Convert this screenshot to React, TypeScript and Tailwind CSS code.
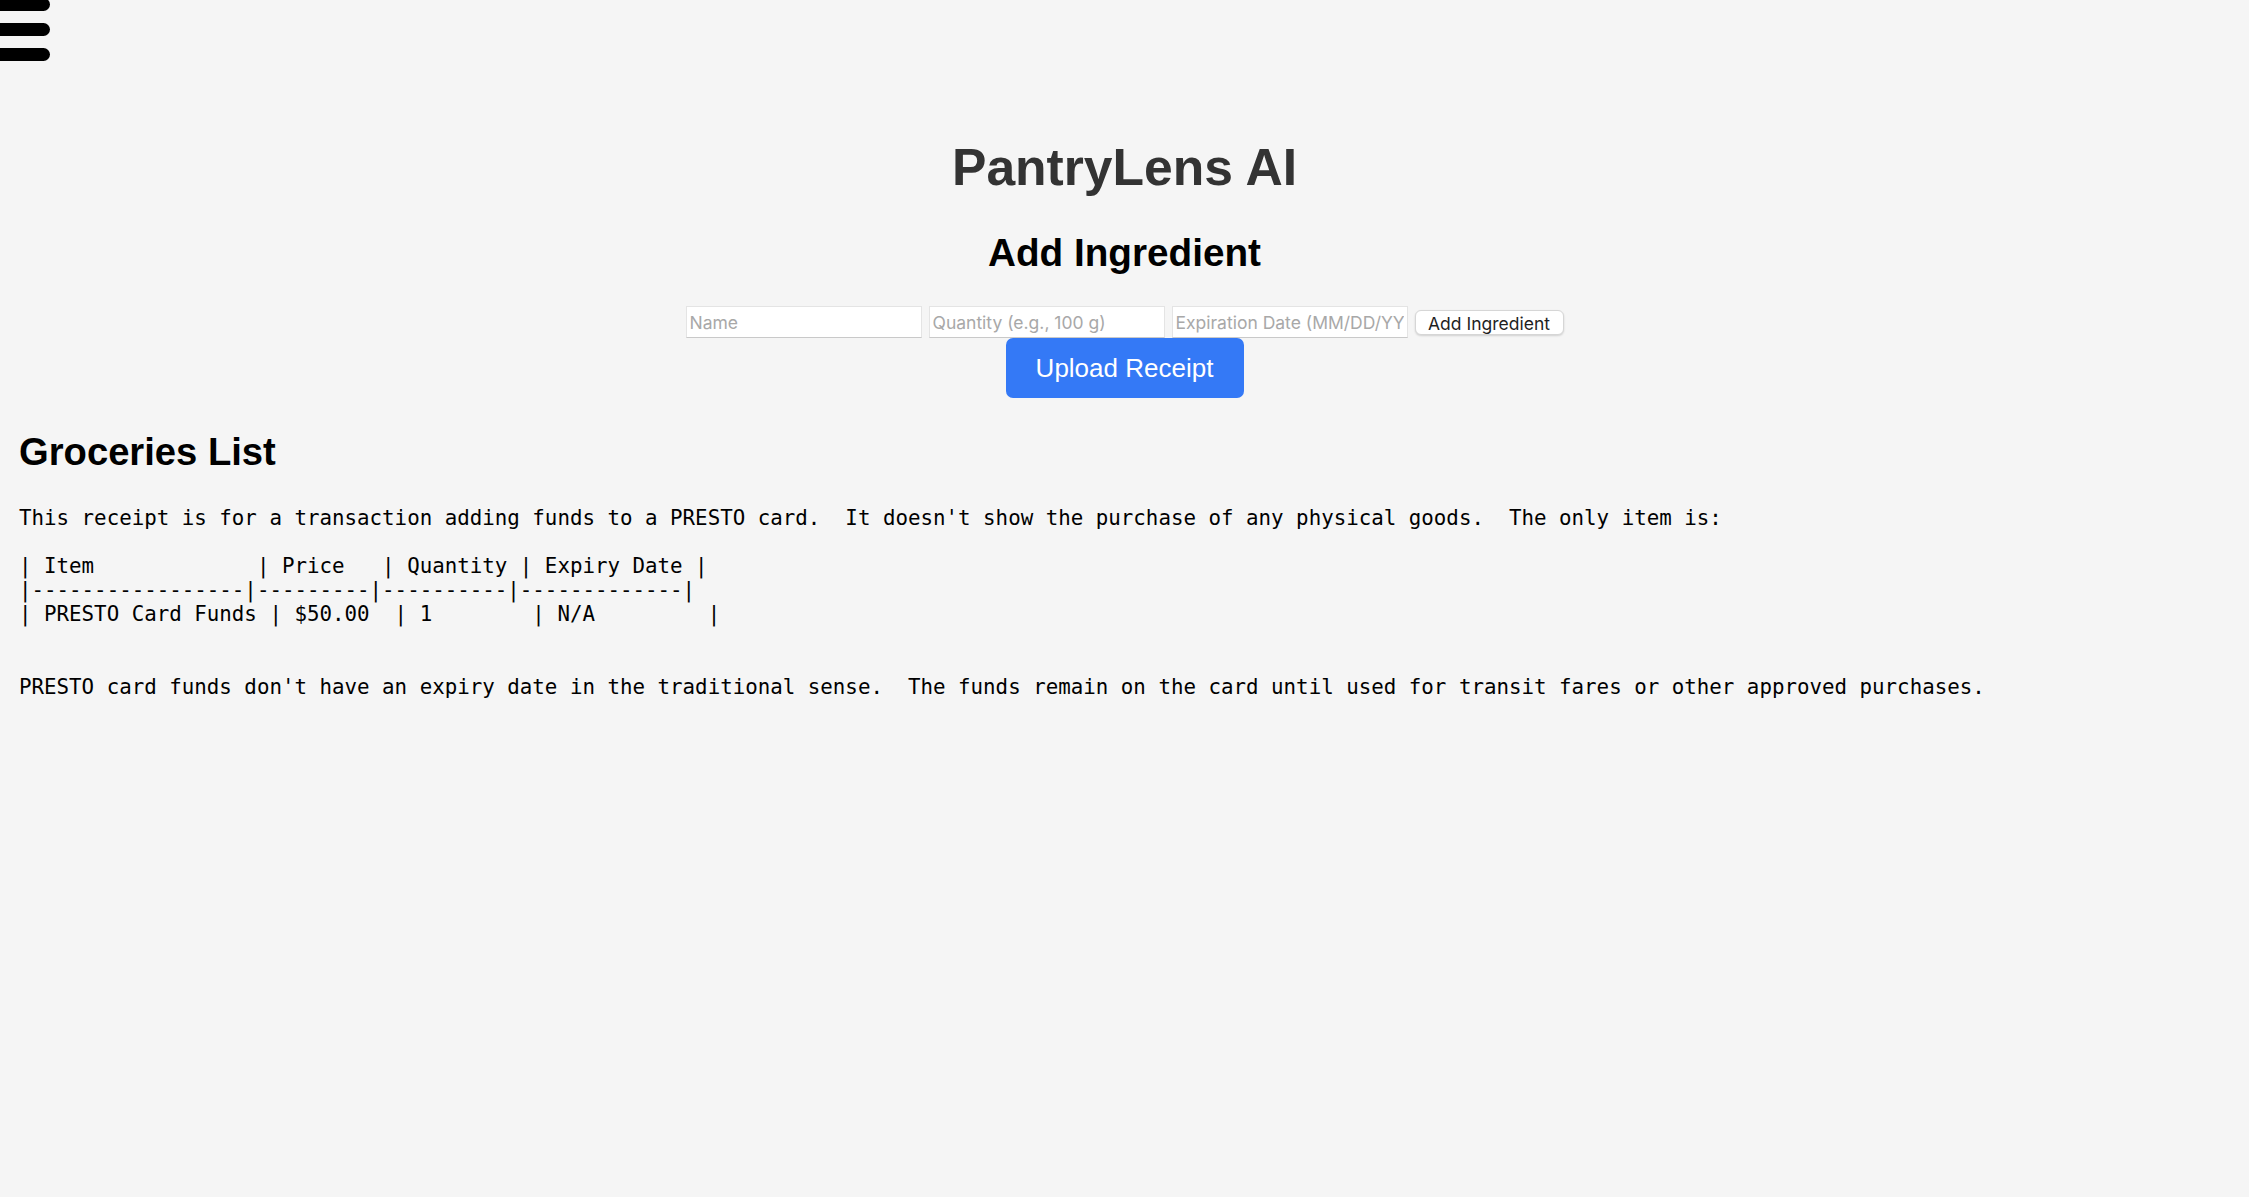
const receiptText = [
  "This receipt is for a transaction adding funds to a PRESTO card.  It doesn't show the purchase of any physical goods.  The only item is:",
  "",
  "| Item             | Price   | Quantity | Expiry Date |",
  "|-----------------|---------|----------|-------------|",
  "| PRESTO Card Funds | $50.00  | 1        | N/A         |",
  "",
  "",
  "PRESTO card funds don't have an expiry date in the traditional sense.  The funds remain on the card until used for transit fares or other approved purchases.",
].join("\n");

const inputClass =
  "h-[32px] w-[236px] border border-[#e4e4e4] border-b-[#c9c9c9] bg-white px-[3px] text-[17.5px] text-black outline-none placeholder:text-[#a8a8a8]";

function MenuIcon() {
  return (
    <div className="-mt-[2px] -ml-[10px] flex w-[60px] flex-col gap-[12px]">
      <span className="h-[13px] rounded-full bg-black" />
      <span className="h-[13px] rounded-full bg-black" />
      <span className="h-[13px] rounded-full bg-black" />
    </div>
  );
}

function AddIngredientForm() {
  return (
    <div className="mt-[34px] flex items-center justify-center gap-[7px] font-['Inter',sans-serif]">
      <input className={inputClass} placeholder="Name" />
      <input className={inputClass} placeholder="Quantity (e.g., 100 g)" />
      <input className={inputClass} placeholder="Expiration Date (MM/DD/YYYY)" />
      <button className="h-[25px] w-[149px] rounded-[6px] border border-[#d6d6d6] bg-white text-[17.5px] text-[#1f1f1f] shadow-[0_1px_2px_rgba(0,0,0,0.15)]">
        Add Ingredient
      </button>
    </div>
  );
}

export default function App() {
  return (
    <div className="min-h-screen overflow-hidden bg-[#f5f5f5] font-['Liberation_Sans',Arial,sans-serif] text-black">
      <MenuIcon />

      <h1 className="mt-[81px] text-center text-[51.6px] leading-none font-bold text-[#333333]">
        PantryLens AI
      </h1>
      <h2 className="mt-[40px] text-center text-[38.7px] leading-none font-bold">
        Add Ingredient
      </h2>

      <AddIngredientForm />

      <div className="flex justify-center">
        <button className="h-[60px] w-[238px] rounded-[7px] bg-[#3479f6] text-[26px] text-white">
          Upload Receipt
        </button>
      </div>

      <section className="px-[19px]">
        <h2 className="mt-[35px] text-[38.2px] leading-none font-bold">
          Groceries List
        </h2>
        <pre className="mt-[34px] font-['DejaVu_Sans_Mono',monospace] text-[20.8px] leading-[24.2px] whitespace-pre-wrap">
          {receiptText}
        </pre>
      </section>
    </div>
  );
}
